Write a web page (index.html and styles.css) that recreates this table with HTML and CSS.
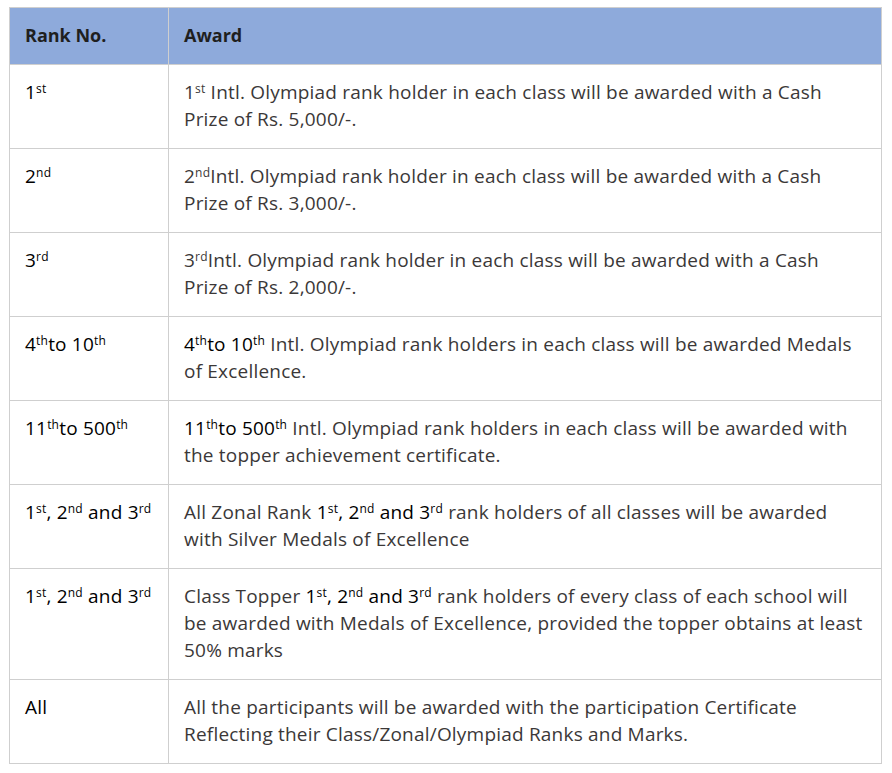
FILE: index.html
```html
<!DOCTYPE html>
<html lang="en">
<head>
<meta charset="utf-8">
<title>Awards</title>
<link rel="stylesheet" href="styles.css">
</head>
<body>
<table class="awards">
  <thead>
    <tr><th class="rank">Rank No.</th><th>Award</th></tr>
  </thead>
  <tbody>
    <tr>
      <td class="rank">1<sup>st</sup></td>
      <td class="award">1<sup>st</sup> Intl. Olympiad rank holder in each class will be awarded with a Cash<br>Prize of Rs. 5,000/-.</td>
    </tr>
    <tr>
      <td class="rank">2<sup>nd</sup></td>
      <td class="award">2<sup>nd</sup>Intl. Olympiad rank holder in each class will be awarded with a Cash<br>Prize of Rs. 3,000/-.</td>
    </tr>
    <tr>
      <td class="rank">3<sup>rd</sup></td>
      <td class="award">3<sup>rd</sup>Intl. Olympiad rank holder in each class will be awarded with a Cash<br>Prize of Rs. 2,000/-.</td>
    </tr>
    <tr>
      <td class="rank">4<sup>th</sup>to 10<sup>th</sup></td>
      <td class="award"><span class="dark">4<sup>th</sup>to 10<sup>th</sup></span> Intl. Olympiad rank holders in each class will be awarded Medals<br>of Excellence.</td>
    </tr>
    <tr>
      <td class="rank">11<sup>th</sup>to 500<sup>th</sup></td>
      <td class="award"><span class="dark">11<sup>th</sup>to 500<sup>th</sup></span> Intl. Olympiad rank holders in each class will be awarded with<br>the topper achievement certificate.</td>
    </tr>
    <tr>
      <td class="rank">1<sup>st</sup>, 2<sup>nd</sup> and 3<sup>rd</sup></td>
      <td class="award">All Zonal Rank <span class="dark">1<sup>st</sup>, 2<sup>nd</sup> and 3<sup>rd</sup></span> rank holders of all classes will be awarded<br>with Silver Medals of Excellence</td>
    </tr>
    <tr>
      <td class="rank">1<sup>st</sup>, 2<sup>nd</sup> and 3<sup>rd</sup></td>
      <td class="award">Class Topper <span class="dark">1<sup>st</sup>, 2<sup>nd</sup> and 3<sup>rd</sup></span> rank holders of every class of each school will<br>be awarded with Medals of Excellence, provided the topper obtains at least<br>50% marks</td>
    </tr>
    <tr>
      <td class="rank">All</td>
      <td class="award">All the participants will be awarded with the participation Certificate<br>Reflecting their Class/Zonal/Olympiad Ranks and Marks.</td>
    </tr>
  </tbody>
</table>
</body>
</html>
```
FILE: styles.css
```css
html, body {
  margin: 0;
  padding: 0;
  background: #ffffff;
}
body {
  padding: 7px 9px;
  font-family: "Open Sans", Lato, sans-serif;
  font-size: 19px;
  letter-spacing: 0.2px;
  line-height: 27px;
}
.awards {
  border-collapse: collapse;
  width: 873px;
  table-layout: fixed;
}
.awards th,
.awards td {
  border: 1px solid #cfcfcf;
  padding: 14px 15px 15px;
  text-align: left;
  vertical-align: top;
  white-space: nowrap;
}
.awards th {
  background: #8eaadb;
  color: #1f1f1f;
  font-size: 18px;
  font-weight: 700;
  letter-spacing: 0;
}
.awards .rank {
  width: 128px;
}
.awards td.rank {
  color: #000000;
}
.awards td.award {
  color: #3b3838;
}
.dark {
  color: #000000;
}
sup {
  font-size: 12px;
  line-height: 0;
  vertical-align: 6px;
}
```
